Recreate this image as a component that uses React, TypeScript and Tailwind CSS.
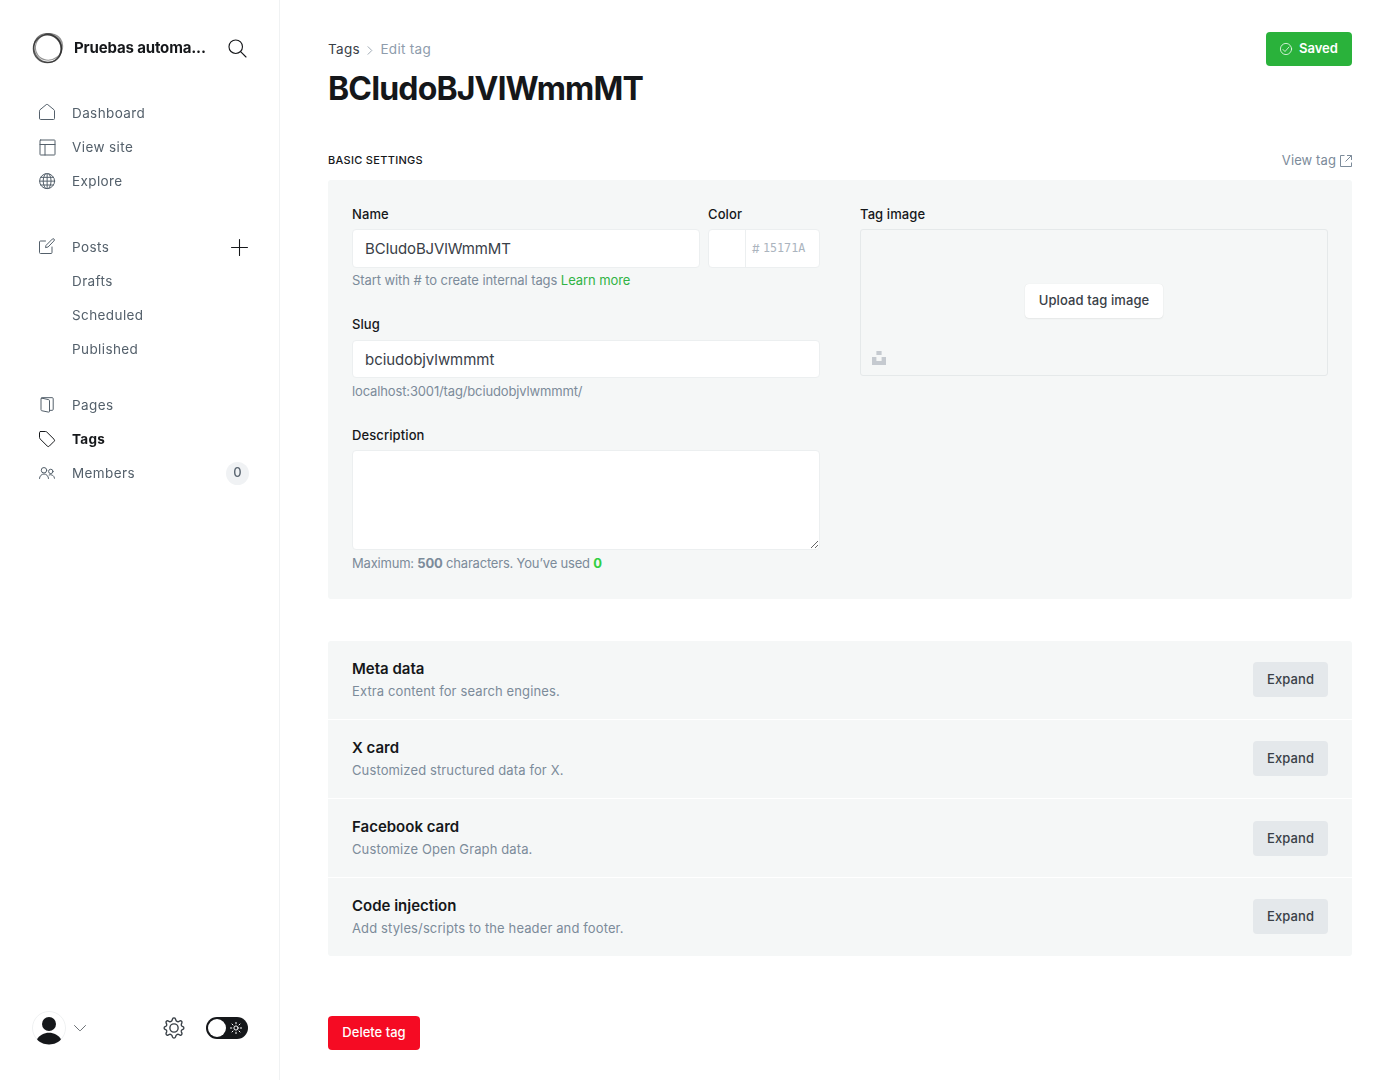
import React from "react";

type IconProps = { className?: string; children: React.ReactNode };

function Icon({ className = "size-4", children }: IconProps) {
  return (
    <svg
      viewBox="0 0 24 24"
      className={`${className} shrink-0 overflow-visible`}
      fill="none"
      stroke="currentColor"
      strokeWidth="1.5"
      strokeLinecap="round"
      strokeLinejoin="round"
    >
      {children}
    </svg>
  );
}

const icons = {
  home: (
    <Icon className="mb-0.5 size-4">
      <path d="M.75 10.200a2 2 0 0 1 .7-1.500L10.900.9a1.800 1.800 0 0 1 2.200 0l9.450 7.800a2 2 0 0 1 .7 1.500v11.550a1.500 1.500 0 0 1-1.500 1.500H2.250a1.500 1.500 0 0 1-1.500-1.500Z" />
    </Icon>
  ),
  site: (
    <Icon>
      <rect x="1.500" y="1.500" width="22.5" height="22.5" rx="1" />
      <path d="M1.500 8.250H24M9 8.250V24" />
    </Icon>
  ),
  globe: (
    <Icon>
      <circle cx="12.200" cy="12.200" r="11.25" />
      <path d="M.75 12.200h22.5M12.200.75v22.5M2.600 6.500h18.800M2.600 18h18.800M9.700 1c-4.600 6-4.600 16 0 22M14.700 1c4.600 6 4.600 16 0 22" />
    </Icon>
  ),
  posts: (
    <Icon className="mb-0.5 size-4">
      <path d="m13.05 13.65-3.3.75.75-3.3L20 1.6a1.8 1.8 0 0 1 2.6 2.6Z" />
      <path d="M19.5 13.5v8.25a1.5 1.5 0 0 1-1.5 1.5H2.25a1.5 1.5 0 0 1-1.5-1.5V6a1.5 1.5 0 0 1 1.5-1.5h7.5" />
    </Icon>
  ),
  pages: (
    <Icon>
      <path d="M4.2 1.7 14.6 4a1.5 1.5 0 0 1 1.15 1.45v16a1.2 1.2 0 0 1-1.5 1.2L4.1 20.6A1.5 1.5 0 0 1 3 19.2V2.6a.9.9 0 0 1 1.2-.9Z" />
      <path d="M4 1.6A1 1 0 0 1 4.8 1h15a1.5 1.5 0 0 1 1.5 1.5v16a1.5 1.5 0 0 1-1.5 1.5h-4" />
    </Icon>
  ),
  tags: (
    <Icon>
      <path d="M2.25.75h7.4a3 3 0 0 1 2.1.88L22.6 12.4a2.2 2.2 0 0 1 0 3.1l-7.1 7.1a2.2 2.2 0 0 1-3.1 0L1.63 11.85a3 3 0 0 1-.88-2.1v-7.5a1.5 1.5 0 0 1 1.5-1.5Z" />
    </Icon>
  ),
  members: (
    <Icon>
      <circle cx="7.5" cy="7.9" r="4.1" />
      <path d="M.75 20.25a6.75 6.75 0 0 1 13.5 0" />
      <circle cx="17.7" cy="9.6" r="3.3" />
      <path d="M15.2 14.9a5.6 5.6 0 0 1 8.05 5" />
    </Icon>
  ),
};

function NavRow({ icon, label, active, children }: { icon?: React.ReactNode; label: string; active?: boolean; children?: React.ReactNode }) {
  return (
    <a
      className={
        active
          ? "flex h-[34px] items-center pr-[31px] pl-[39px] text-[13.5px] font-bold tracking-[0.3px] text-[#15171a]"
          : "flex h-[34px] items-center pr-[31px] pl-[39px] text-[13.5px] tracking-[0.4px] text-[#54606b]"
      }
    >
      <span className="mr-[17px] flex w-4">{icon}</span>
      <span className="flex-1 leading-5">{label}</span>
      {children}
    </a>
  );
}

function Logo() {
  return (
    <svg viewBox="0 0 32 32" className="size-8 shrink-0" fill="none" stroke="#2b2b2b">
      <circle cx="15.400" cy="16.700" r="13.900" strokeWidth="1.500" opacity=".8" />
      <ellipse cx="17" cy="14.900" rx="13.900" ry="13" strokeWidth="1.100" opacity=".5" transform="rotate(-35 17 14.900)" />
      <ellipse cx="15.700" cy="16" rx="14.700" ry="13.600" strokeWidth="1.100" opacity=".65" transform="rotate(60 15.700 16)" />
      <path d="M11 2.600C17-.300 24 1.500 28 7c3.200 5 2.800 12-1.500 17 1.800-3.600 2.300-7.200 1.600-10.300C26.500 6.600 19 2.300 11 2.600Z" fill="#2b2b2b" stroke="none" opacity=".45" />
    </svg>
  );
}

function Sidebar() {
  return (
    <nav className="flex w-[280px] shrink-0 flex-col border-r border-[#f0f2f3] bg-white will-change-transform">
      <div className="flex h-[96px] items-center pl-8">
        <Logo />
        <span className="ml-[10px] flex-1 text-[15px] font-bold tracking-[-0.15px] text-[#15171a]">Pruebas automa...</span>
        <Icon className="mr-[33px] size-[18px] text-[#15171a]">
          <circle cx="10.300" cy="10.300" r="9" />
          <path d="m16.800 16.800 7.200 7.200" />
        </Icon>
      </div>
      <NavRow icon={icons.home} label="Dashboard" />
      <NavRow icon={icons.site} label="View site" />
      <NavRow icon={icons.globe} label="Explore" />
      <div className="mt-8">
        <NavRow icon={icons.posts} label="Posts">
          <Icon className="size-[17px] text-[#15171a]">
            <path d="M12 .75v22.500M.75 12h22.500" />
          </Icon>
        </NavRow>
        <NavRow label="Drafts" />
        <NavRow label="Scheduled" />
        <NavRow label="Published" />
      </div>
      <div className="mt-[22px] flex-1">
        <NavRow icon={icons.pages} label="Pages" />
        <NavRow icon={icons.tags} label="Tags" active />
        <NavRow icon={icons.members} label="Members">
          <span className="-mr-px flex size-[23px] items-center justify-center rounded-full bg-[#f0f2f4] text-[13px] font-medium tracking-normal text-[#5d6873]">0</span>
        </NavRow>
      </div>
      <div className="mb-[35px] flex h-[34px] items-center pr-[31.5px] pl-8">
        <svg viewBox="0 0 34 34" className="size-[34px]" fill="#15171a">
          <circle cx="17" cy="17" r="16.5" fill="none" stroke="#eff1f2" />
          <circle cx="17" cy="13" r="7" />
          <path d="M5 28.300C7.500 24.300 12 21.800 17 21.800s9.500 2.500 12 6.500C26.500 31.500 22 33.500 17 33.500S7.500 31.500 5 28.300Z" />
        </svg>
        <Icon className="ml-2 size-3 text-[#394047]">
          <path d="m1 7 10.300 10.300a1 1 0 0 0 1.400 0L23 7" />
        </Icon>
        <svg viewBox="0 0 24 24" className="ml-auto size-[22px] text-[#394047]" fill="none" stroke="currentColor" strokeWidth="1.500" strokeLinejoin="round">
          <circle cx="12" cy="12" r="4.500" />
          <path d="m13.600 2.100.5 1.500a2.200 2.200 0 0 0 2.900 1.350l1.500-.65a1.600 1.600 0 0 1 2.100 2.100l-.65 1.500A2.200 2.200 0 0 0 21 10.300l.8.300a1.500 1.500 0 0 1 0 2.800l-.8.300a2.200 2.200 0 0 0-1.050 2.400l.65 1.500a1.600 1.600 0 0 1-2.100 2.100l-1.500-.65a2.200 2.200 0 0 0-2.900 1.350l-.5 1.500a1.700 1.700 0 0 1-3.200 0l-.5-1.500A2.200 2.200 0 0 0 7 19.050l-1.500.65a1.600 1.600 0 0 1-2.100-2.100l.65-1.500A2.200 2.200 0 0 0 3 13.700l-.8-.3a1.500 1.500 0 0 1 0-2.800l.8-.3a2.200 2.200 0 0 0 1.050-2.400L3.400 6.400a1.600 1.600 0 0 1 2.100-2.100l1.500.65A2.200 2.200 0 0 0 9.900 3.600l.5-1.500a1.700 1.700 0 0 1 3.200 0Z" />
        </svg>
        <span className="ml-[21px] flex h-[22px] w-[42px] items-center justify-between rounded-full bg-[#15171a] pr-[6px] pl-[2px]">
          <span className="size-[18px] rounded-full bg-white" />
          <svg viewBox="0 0 12 12" className="size-3" fill="none" stroke="white" strokeWidth="1" strokeLinecap="round">
            <circle cx="6" cy="6" r="2.100" />
            <path d="M6 .4v1.400M6 10.200v1.400M.4 6h1.400M10.200 6h1.400M2 2l1 1M9 9l1 1M2 10l1-1M9 3l1-1" />
          </svg>
        </span>
      </div>
    </nav>
  );
}

function Label({ children }: { children: React.ReactNode }) {
  return <div className="h-[15px] text-[13px] leading-[15px] font-medium tracking-[0.1px] text-[#15171a]">{children}</div>;
}

const sections = [
  { title: "Meta data", text: "Extra content for search engines.", button: "mt-[21px]" },
  { title: "X card", text: "Customized structured data for X.", button: "mt-[21px]" },
  { title: "Facebook card", text: "Customize Open Graph data.", button: "mt-[22px]" },
  { title: "Code injection", text: "Add styles/scripts to the header and footer.", button: "mt-[21px]" },
];

export default function App() {
  return (
    <div className="flex h-[1080px] w-[1400px] overflow-hidden bg-white font-['Inter',sans-serif]">
      <Sidebar />
      <main className="flex flex-1 flex-col px-12 pt-8">
        <header className="flex h-[120px] items-start justify-between">
          <div>
            <div className="mt-[9px] flex h-4 items-center text-[13.5px] leading-4 tracking-[0.3px] text-[#394047]">
              <span>Tags</span>
              <svg viewBox="0 0 6 10" className="mr-[7px] ml-[7.500px] mt-0.5 h-[9px] w-[6px]" fill="none" stroke="#95a1ad">
                <path d="m.5.500 4.500 4.500L.5 9.500" />
              </svg>
              <span className="text-[#8e9cac]">Edit tag</span>
            </div>
            <h1 className="mt-[12px] text-[32px] leading-10 font-bold tracking-[-0.85px] text-[#15171a]">BCIudoBJVlWmmMT</h1>
          </div>
          <button className="flex h-[34px] w-[86px] items-center rounded-[4px] bg-[#2ab23b] pl-[14px] text-[13px] font-semibold text-white">
            <Icon className="mr-[7px] size-3">
              <circle cx="12" cy="12" r="11.200" />
              <path d="m6 13 4 4 8-9" />
            </Icon>
            Saved
          </button>
        </header>
        <div className="flex h-7 items-start justify-between">
          <h4 className="text-[11px] leading-4 font-medium tracking-[0.3px] text-[#15171a] uppercase">Basic settings</h4>
          <a className="flex items-center text-[13px] leading-4 tracking-[0.1px] text-[#7c8b9a]">
            View tag
            <svg viewBox="0 0 12 12" className="mt-px ml-1 size-3" fill="none" stroke="currentColor">
              <path d="M4.500.5h-4v11h11v-4M7 .5h4.500V5M11.500.5 5.500 6.500" />
            </svg>
          </a>
        </div>
        <section className="flex h-[419px] shrink-0 gap-10 rounded-[3px] bg-[#f5f7f7] px-6 pt-[27px]">
          <div className="w-[468px]">
            <div className="flex gap-2">
              <div className="w-[348px]">
                <Label>Name</Label>
                <div className="mt-[7px] flex h-[39px] items-center rounded-[4px] border border-[#eceff0] bg-white px-3 pt-0.5 text-[15px] tracking-[-0.15px] text-[#394047]">BCIudoBJVlWmmMT</div>
              </div>
              <div className="w-[112px]">
                <Label>Color</Label>
                <div className="mt-[7px] flex h-[39px] rounded-[4px] border border-[#eceff0] bg-white">
                  <div className="w-[37px] border-r border-[#eceff0]" />
                  <div className="flex flex-1 items-center pt-px pl-[6px] text-[#abb4be]">
                    <span className="w-[11px] text-[12px]">#</span>
                    <span className="font-['DejaVu_Sans_Mono',monospace] text-[11.7px]">15171A</span>
                  </div>
                </div>
              </div>
            </div>
            <p className="mt-1 text-[13px] leading-4 tracking-[-0.08px] text-[#7c8b9a]">
              Start with # to create internal tags <a className="text-[#30b344]">Learn more</a>
            </p>
            <div className="mt-[29px]">
              <Label>Slug</Label>
              <div className="mt-[8px] flex h-[38px] items-center rounded-[4px] border border-[#eceff0] bg-white px-3 pt-0.5 text-[15px] tracking-[-0.05px] text-[#394047]">bciudobjvlwmmmt</div>
              <p className="mt-[5px] text-[13px] leading-4 tracking-[-0.14px] text-[#7c8b9a]">localhost:3001/tag/bciudobjvlwmmmt/</p>
            </div>
            <div className="mt-[29px]">
              <Label>Description</Label>
              <textarea className="mt-[7px] block h-[100px] w-full resize rounded-[4px] border border-[#eceff0] bg-white" />
              <p className="mt-[5px] text-[13px] leading-4 tracking-[-0.2px] text-[#7c8b9a]">
                Maximum: <b>500</b> characters. You’ve used <b className="text-[#30cf43]">0</b>
              </p>
            </div>
          </div>
          <div className="flex-1">
            <Label>Tag image</Label>
            <div className="relative mt-[7px] flex h-[147px] items-center justify-center rounded-[3px] border border-[#e5e9ea]">
              <button className="mt-[-4px] h-[34px] w-[138px] rounded-[4px] bg-white text-[13px] font-medium tracking-[0.1px] text-[#394047] shadow-[0_0_1px_rgba(0,0,0,0.1),0_1px_2px_rgba(0,0,0,0.06)]">Upload tag image</button>
              <svg viewBox="0 0 14 14" className="absolute bottom-[10px] left-[11px] size-[14px]" fill="#c5cad0">
                <path d="M4.400 0h5.200v4H4.400ZM0 6h4.400v4h5.200V6H14v8H0Z" />
              </svg>
            </div>
          </div>
        </section>
        <section className="mt-[42px] shrink-0 divide-y divide-white rounded-[3px] bg-[#f5f7f7]">
          {sections.map((s) => (
            <div key={s.title} className="flex h-[79px] items-start justify-between px-6 last:h-[78px]">
              <div>
                <h4 className="mt-[19px] text-[15px] leading-[18px] font-semibold text-[#15171a]">{s.title}</h4>
                <p className="mt-[5px] text-[13px] leading-4 tracking-[0.12px] text-[#7c8b9a]">{s.text}</p>
              </div>
              <button className={`${s.button} h-[35px] w-[75px] rounded-[4px] bg-[#e4e8eb] text-[13px] font-medium tracking-[0.1px] text-[#394047]`}>Expand</button>
            </div>
          ))}
        </section>
        <button className="mt-[60px] h-[34px] w-[92px] rounded-[4px] bg-[#f50b23] text-[13px] font-medium text-white">Delete tag</button>
      </main>
    </div>
  );
}
